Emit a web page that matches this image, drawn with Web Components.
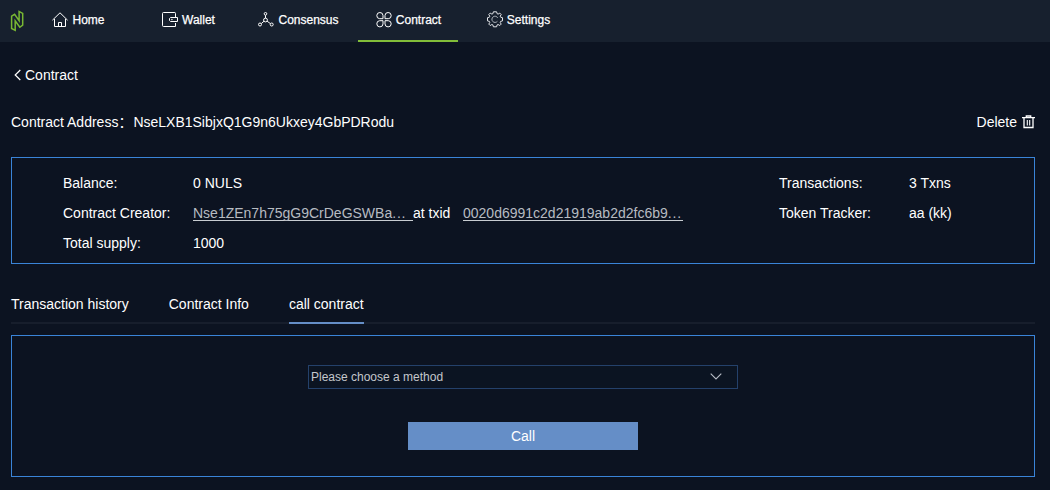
<!DOCTYPE html>
<html lang="en">
<head>
<meta charset="utf-8">
<title>Contract</title>
<style>
html,body{margin:0;height:100%;background:#0c1321}
body{font:14px/20px "Liberation Sans","Noto Sans CJK SC",sans-serif;color:#fff;overflow:hidden}
</style>
</head>
<body>
<contract-page></contract-page>
<script>
const define = (name, html) => customElements.define(name, class extends HTMLElement {
  constructor() {
    super();
    this.attachShadow({ mode: 'open' }).innerHTML = html;
  }
});

const icons = {
  logo: [14, 22, '<path d="M1.6 18.5V6.2L4.6 4.3L9.1 10.6V1.4L12.7 3.4V15.2L9.8 17.3L5.2 10.8V20.3Z" fill="none" stroke="#79b833" stroke-width="1.5"/>'],
  home: [16, 16, '<path d="M.4 8.2L8 .8L15.6 8.2M2.5 7V14.5H13.5V7M6.5 14.5V10.5H9.5V14.5" fill="none" stroke="#fff" stroke-width="1"/>'],
  wallet: [16, 16, '<path d="M13.5 5V1.5Q13.5.5 12.9.5H1.5Q.5.5.5 1.5V13.5Q.5 14.5 1.5 14.5H13.5V11M15.5 5.5H8.5L7.5 6.5V8.5L8.5 9.5H15.5Z" fill="none" stroke="#fff" stroke-width="1"/><circle cx="9.9" cy="7.5" r=".7" fill="#fff"/>'],
  consensus: [16, 16, '<g fill="none" stroke="#fff" stroke-width="1"><circle cx="7.5" cy="1.8" r="1.3"/><circle cx="7.5" cy="8" r="1.9"/><circle cx="2" cy="12.5" r="1.5"/><circle cx="13.7" cy="12.5" r="1.5"/><path d="M7.5 3.2V6.2M6 9.2L3.3 11.6M9.1 9.2L12.4 11.6"/></g>'],
  contract: [16, 16, '<path d="M7 6.7H3.7A3.1 3.1 0 1 1 7 3.5ZM9 6.7V3.5A3.1 3.1 0 1 1 12.3 6.7ZM7 8.7V11.9A3.1 3.1 0 1 1 3.7 8.7ZM9 8.7H12.3A3.1 3.1 0 1 1 9 11.9Z" fill="none" stroke="#fff" stroke-width="1"/>'],
  settings: [16, 16, '<g transform="translate(0 -.7)" fill="none" stroke="#e4e6ea" stroke-width="1"><path d="M6.4.5H9.6L10.1 2.4L11.1 2.8L12.8 1.8L14.2 3.2L13.2 4.9L13.6 5.9L15.5 6.4V9.6L13.6 10.1L13.2 11.1L14.2 12.8L12.8 14.2L11.1 13.2L10.1 13.6L9.6 15.5H6.4L5.9 13.6L4.9 13.2L3.2 14.2L1.8 12.8L2.8 11.1L2.4 10.1L.5 9.6V6.4L2.4 5.9L2.8 4.9L1.8 3.2L3.2 1.8L4.9 2.8L5.9 2.4Z" stroke-linejoin="round"/><path d="M10.4 10A3.1 3.1 0 1 1 10.7 6.5" stroke="#aeb4bc"/></g>'],
  back: [7, 12, '<path d="M6.3 1L1.2 6L6.3 11" fill="none" stroke="#fff" stroke-width="1.2"/>'],
  trash: [13, 14, '<path d="M0 2.7H13M4.3 2.5V1H8.7V2.5M2 3V12.5H11V3" fill="none" stroke="#fff" stroke-width="1.3"/><path d="M5.3 5V10.5M7.7 5V10.5" stroke="#fff" stroke-width="1.1"/>'],
  down: [12, 7, '<path d="M.7.7L6 5.9L11.3.7" fill="none" stroke="#b8bdc6" stroke-width="1.1"/>']
};

customElements.define('ui-icon', class extends HTMLElement {
  connectedCallback() {
    const [w, h, body] = icons[this.getAttribute('name')];
    const root = this.shadowRoot || this.attachShadow({ mode: 'open' });
    root.innerHTML = `<style>:host{display:inline-block;flex:none;width:${w}px;height:${h}px}svg{display:block;overflow:visible}</style>
      <svg width="${w}" height="${h}" viewBox="0 0 ${w} ${h}">${body}</svg>`;
  }
});

define('nav-item', `<style>
  :host{display:grid;grid-template-columns:16px auto;box-sizing:border-box;width:100px;height:42px;justify-content:center;align-content:start;gap:4px;padding:12px 0 0 1px;font-size:12px;line-height:17px;border-bottom:2px solid transparent;-webkit-text-stroke:.25px #fff}
  :host([active]){border-color:#82bd39}
  </style><slot name="icon"></slot><span><slot></slot></span>`);

define('top-bar', `<style>
  :host{display:flex;height:42px;padding-left:10px;background:#17202e}
  .logo{margin-top:10px;width:18px}nav{display:flex;gap:10px}
  </style><ui-icon class="logo" name="logo"></ui-icon><nav>
  <nav-item><ui-icon slot="icon" name="home"></ui-icon>Home</nav-item>
  <nav-item><ui-icon slot="icon" name="wallet"></ui-icon>Wallet</nav-item>
  <nav-item><ui-icon slot="icon" name="consensus"></ui-icon>Consensus</nav-item>
  <nav-item active><ui-icon slot="icon" name="contract"></ui-icon>Contract</nav-item>
  <nav-item><ui-icon slot="icon" name="settings"></ui-icon>Settings</nav-item></nav>`);

define('info-row', `<style>
  :host{display:flex;height:30px;line-height:30px;white-space:pre}
  .label{width:130px;flex:none}
  </style><span class="label"><slot name="label"></slot></span><slot></slot>`);

define('hash-link', `<style>
  :host{display:block;box-sizing:border-box;width:220px;height:16px;margin-top:7px;line-height:16px;border-bottom:1px solid #c8ccd1;color:#b7bbc1;white-space:nowrap}
  .dots{letter-spacing:.8px}
  </style><slot></slot><span class="dots">...</span>`);

define('outline-panel', `<style>
  :host{display:block;box-sizing:border-box;border:1px solid #3a84d8}
  </style><slot></slot>`);

define('tab-item', `<style>
  :host{display:block;box-sizing:border-box;height:30px;border-bottom:2px solid transparent}
  :host([active]){border-color:#658ec7}
  </style><slot></slot>`);

define('tab-bar', `<style>
  :host{display:flex;gap:40px;height:30px;background:linear-gradient(#171e2c,#171e2c) bottom/100% 2px no-repeat}
  </style><slot></slot>`);

define('method-select', `<style>
  :host{display:flex;box-sizing:border-box;width:430px;height:24px;align-items:center;justify-content:space-between;padding:0 15px 0 2px;border:1px solid #24416b;background:#0b1422;color:#c4c7cc;font-size:12px}
  ui-icon{margin-top:-2px}
  </style><slot></slot><ui-icon name="down"></ui-icon>`);

define('action-button', `<style>
  :host{display:block;width:230px;height:28px;line-height:28px;text-align:center;background:#658ec7}
  </style><slot></slot>`);

define('contract-page', `<style>
  :host{display:block}
  main{padding:23px 15px 0 11px}
  .back{display:flex;align-items:center;gap:4px;padding-left:3px;height:20px}
  .address{display:flex;justify-content:space-between;height:20px;margin-top:27px}
  .address span{display:flex;height:20px}
  .address .value{margin-left:1px}
  .delete{align-items:center;gap:5px}
  .info{display:grid;grid-template-columns:716px 1fr;height:107px;margin-top:25px;padding:10px 0 0 51px}
  .at{width:50px}
  tab-bar{margin-top:30px}
  .call{display:flex;flex-direction:column;align-items:center;gap:33px;height:142px;margin-top:11px;padding:29px 0 0}
  </style>
  <top-bar></top-bar>
  <main>
    <div class="back"><ui-icon name="back"></ui-icon><span>Contract</span></div>
    <div class="address"><span>Contract Address：<span class="value">NseLXB1SibjxQ1G9n6Ukxey4GbPDRodu</span></span><span class="delete">Delete<ui-icon name="trash"></ui-icon></span></div>
    <outline-panel class="info">
      <div>
        <info-row><span slot="label">Balance:</span>0 NULS</info-row>
        <info-row><span slot="label">Contract Creator:</span><hash-link>Nse1ZEn7h75gG9CrDeGSWBa</hash-link><span class="at">at txid</span><hash-link>0020d6991c2d21919ab2d2fc6b9</hash-link></info-row>
        <info-row><span slot="label">Total supply:</span>1000</info-row>
      </div>
      <div>
        <info-row><span slot="label">Transactions:</span>3 Txns</info-row>
        <info-row><span slot="label">Token Tracker:</span>aa (kk)</info-row>
      </div>
    </outline-panel>
    <tab-bar><tab-item>Transaction history</tab-item><tab-item>Contract Info</tab-item><tab-item active>call contract</tab-item></tab-bar>
    <outline-panel class="call"><method-select>Please choose a method</method-select><action-button>Call</action-button></outline-panel>
  </main>`);
</script>
</body>
</html>
